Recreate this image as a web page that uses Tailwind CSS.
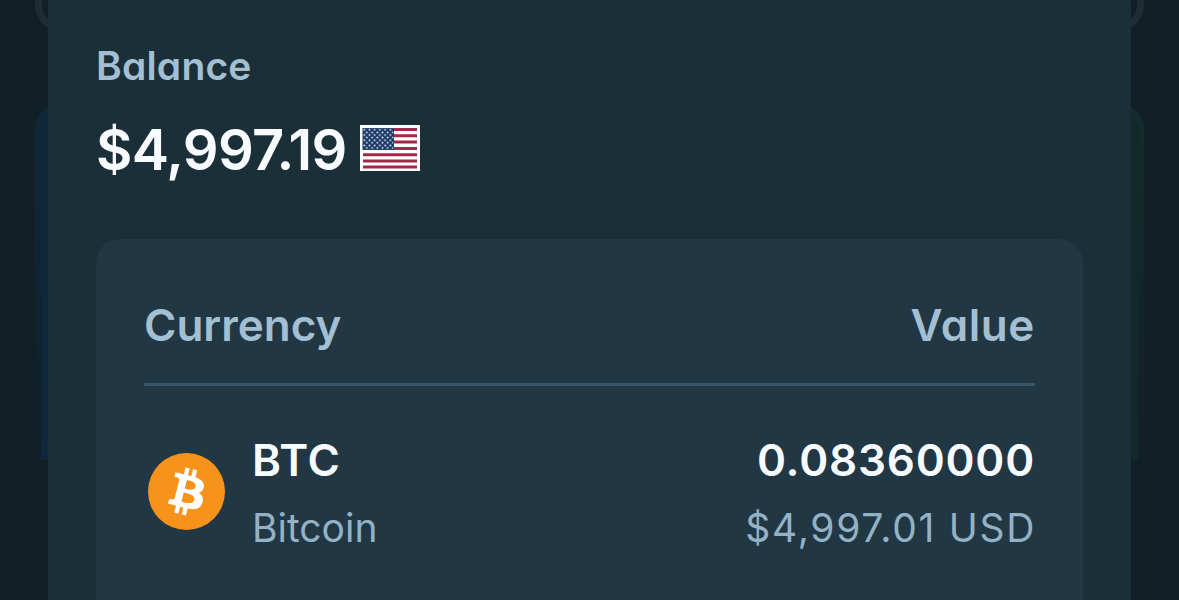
<!DOCTYPE html>
<html lang="en">
<head>
    <meta charset="utf-8">
    <title>Balance</title>
    <script src="https://cdn.jsdelivr.net/npm/@tailwindcss/browser@4"></script>
</head>
<body class="bg-[#111f27] font-['Inter',sans-serif] [font-feature-settings:'cv11'] overflow-hidden">
    <div class="relative h-[600px] px-12 overflow-hidden">
        <!-- Dimmed page behind the panel -->
        <div class="absolute -top-12 left-[35px] right-[35px] h-[79px] rounded-[26px] border-7 border-[#1f2c34]"></div>
        <div class="absolute top-[105px] left-[35px] w-40 h-[355px] rounded-tl-[24px] bg-linear-to-b from-[#11273a] to-[#111f27]"></div>
        <div class="absolute top-[111px] left-[41px] w-40 h-[349px] rounded-tl-[18px] bg-[#10263a]"></div>
        <div class="absolute top-[105px] right-[35px] w-40 h-[355px] rounded-tr-[24px] bg-linear-to-b from-[#122d2b] to-[#111f27]"></div>
        <div class="absolute top-[111px] right-[41px] w-40 h-[349px] rounded-tr-[18px] bg-[#11292a]"></div>

        <!-- Balance panel -->
        <main class="relative h-full bg-[#1b2f39] px-12 pt-[42px]">
            <div class="h-12 leading-[48px] text-[39px] font-semibold text-[#a3bfd2] tracking-[0.2px]">Balance</div>
            <div class="mt-6 h-[72px] flex items-center">
                <span class="w-[264px] leading-[72px] text-[56px] font-semibold text-[#f7fbff] tracking-[-0.75px]">$4,997.19</span>
                <svg class="w-[60px] h-[46px] -mt-1" viewBox="0 0 60 46">
                    <defs>
                        <pattern id="stars" width="5.2" height="5.2" patternUnits="userSpaceOnUse" x="3" y="3.5">
                            <circle cx="1.3" cy="1.3" r=".9" fill="#fff"/>
                            <circle cx="3.9" cy="3.9" r=".9" fill="#fff"/>
                        </pattern>
                    </defs>
                    <rect width="60" height="46" fill="#fff"/>
                    <path d="M3 4.5h54M3 10.8h54M3 17.1h54M3 23.4h54M3 29.7h54M3 36h54M3 42h54" stroke="#a32748" stroke-width="3"/>
                    <rect x="2.5" y="3" width="31.5" height="22" fill="#1b3a68"/>
                    <rect x="3" y="3" width="30.5" height="21.5" fill="url(#stars)"/>
                </svg>
            </div>

            <div class="mt-[53px] h-[400px] rounded-t-3xl bg-[#213743] px-12 pt-[58px]">
                <div class="flex justify-between h-[89px] border-b-3 border-[#3a5568] leading-[56px] text-[44px] font-semibold text-[#a3bfd2]">
                    <span>Currency</span>
                    <span class="tracking-[0.6px]">Value</span>
                </div>
                <div class="flex items-center mt-[38px] h-[140px]">
                    <svg class="w-[77px] h-[77px] ml-[3.5px] mt-[-6px]" viewBox="0 0 32 32">
                        <circle cx="16" cy="16" r="16" fill="#f7931a"/>
                        <path fill="#fff" d="M23.189 14.02c.314-2.096-1.283-3.223-3.465-3.975l.708-2.84-1.728-.43-.69 2.765c-.454-.114-.92-.22-1.385-.326l.695-2.783L15.596 6l-.708 2.839c-.376-.086-.746-.17-1.104-.26l.002-.009-2.384-.595-.46 1.846s1.283.294 1.256.312c.7.175.826.638.805 1.006l-.806 3.235c.048.012.11.03.18.057l-.183-.045-1.13 4.532c-.086.212-.303.531-.793.41.018.025-1.256-.313-1.256-.313l-.858 1.978 2.25.561c.418.105.828.215 1.231.318l-.715 2.872 1.727.43.708-2.84c.472.127.93.245 1.378.357l-.706 2.828 1.728.43.715-2.866c2.948.558 5.164.333 6.097-2.333.752-2.146-.037-3.385-1.588-4.192 1.13-.26 1.98-1.003 2.207-2.538zm-3.95 5.538c-.533 2.147-4.148.986-5.32.695l.95-3.805c1.172.293 4.929.872 4.37 3.11zm.535-5.569c-.487 1.953-3.495.96-4.47.717l.86-3.45c.975.243 4.118.696 3.61 2.733z"/>
                    </svg>
                    <div class="ml-[27.5px] h-full flex flex-col gap-3 pt-2">
                        <div class="h-14 leading-[56px] text-[44px] font-semibold text-[#f7fbff] tracking-[0.7px]">BTC</div>
                        <div class="h-14 leading-[56px] text-[39px] text-[#93b2c6]">Bitcoin</div>
                    </div>
                    <div class="ml-auto h-full flex flex-col items-end gap-3 pt-2">
                        <div class="h-14 leading-[56px] text-[44px] font-semibold text-[#f7fbff] tracking-[0.8px]">0.08360000</div>
                        <div class="-mr-px h-14 leading-[56px] text-[39px] text-[#93b2c6] tracking-[1.7px]">$4,997.01 USD</div>
                    </div>
                </div>
            </div>
        </main>
    </div>
</body>
</html>
